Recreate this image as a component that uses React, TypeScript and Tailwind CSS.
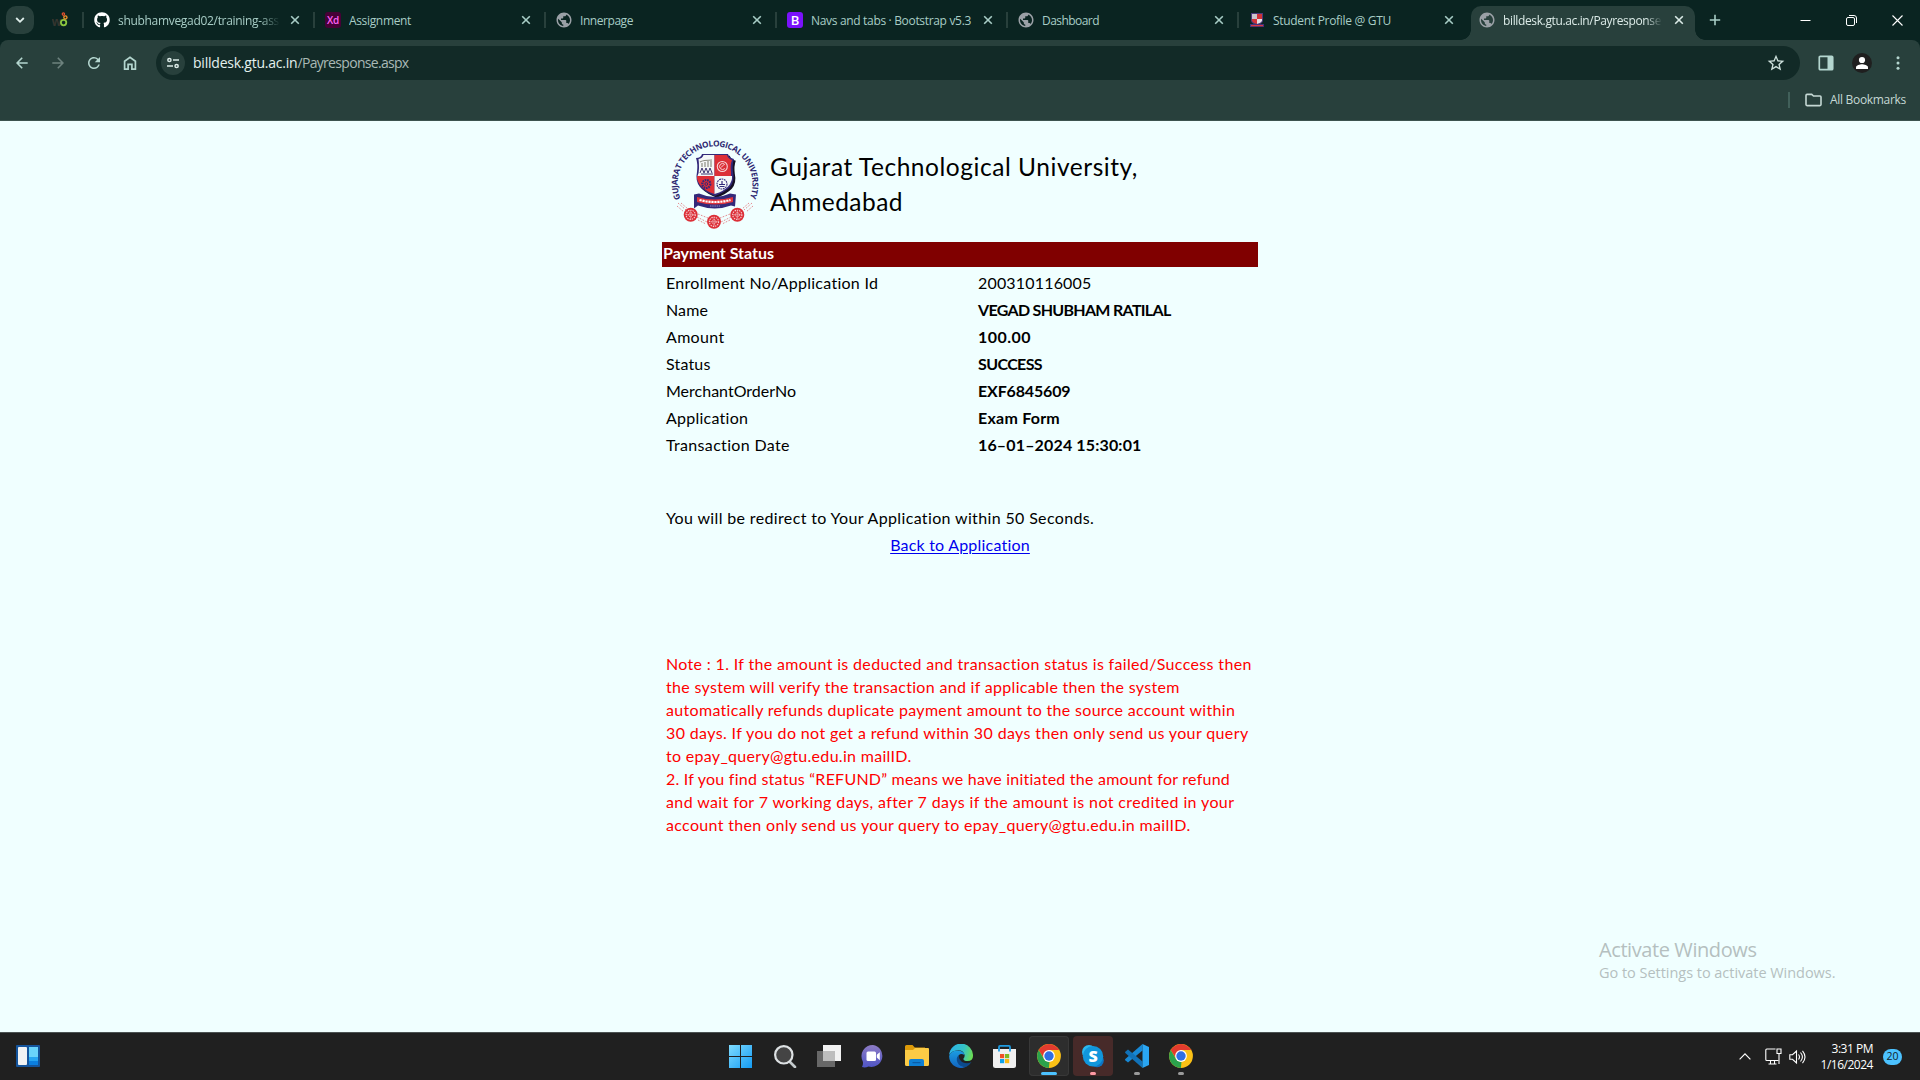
import React, { useLayoutEffect, useRef, useState } from "react";
import { FaGithub } from "react-icons/fa";
import { MdPublic, MdRefresh, MdStarBorder } from "react-icons/md";

/* Single line of text whose tracking is adjusted once, on mount, so that it spans a given width. */
function Line({ w, className = "", children }: { w: number; className?: string; children: string }) {
  const ref = useRef<HTMLSpanElement>(null);
  const [tracking, setTracking] = useState(0);
  useLayoutEffect(() => {
    const natural = ref.current!.getBoundingClientRect().width;
    setTracking((w - natural) / children.length);
  }, []);
  return (
    <span ref={ref} className={`inline-block w-max whitespace-pre ${className}`} style={{ letterSpacing: `${tracking}px` }}>
      {children}
    </span>
  );
}

function CloseX({ className = "" }: { className?: string }) {
  return (
    <svg viewBox="0 0 10 10" className={`size-[10px] shrink-0 ${className}`} fill="none" stroke="currentColor" strokeWidth="1.6">
      <path d="M1.2 1.2 8.8 8.8M8.8 1.2 1.2 8.8" />
    </svg>
  );
}

function Globe() {
  return <MdPublic className="-m-px size-[18px] shrink-0 text-[#9aa0a6]" />;
}

function XdIcon() {
  return (
    <div className="flex size-4 items-center justify-center rounded-[3px] bg-[#470137] text-[10px] font-semibold leading-none tracking-tight text-[#ff61f6]">
      Xd
    </div>
  );
}

function BootstrapIcon() {
  return (
    <div className="flex size-4 items-center justify-center rounded-[3px] bg-[#7a12fb] text-[13px] font-semibold leading-none text-white">
      B
    </div>
  );
}

function CrestIcon() {
  return (
    <svg viewBox="0 0 16 16" className="size-4">
      <path d="M2 1h12v8q-1 3-6 4Q3 12 2 9Z" fill="#4a3a7a" />
      <path d="M3 2h5v5H3Z" fill="#c9c4cc" />
      <path d="M8 2h5v5H8Z" fill="#d03238" />
      <path d="M3 7h5v5Q4 11 3 9Z" fill="#d03238" />
      <path d="M8 7h5v2q-1 2-5 3Z" fill="#e6dfe6" />
      <path d="M1 12h14v3H1Z" fill="#453079" />
      <path d="M2 13h12v1.2H2Z" fill="#d83a42" />
    </svg>
  );
}

function PinnedIcon() {
  return (
    <svg viewBox="0 0 16 16" className="size-4">
      <text x="-0.5" y="13.5" fontSize="12" fontWeight="700" fill="#35352f" fontFamily="Open Sans, sans-serif">w</text>
      <circle cx="11.6" cy="10.6" r="2.7" fill="none" stroke="#8cc63f" strokeWidth="1.8" />
      <circle cx="13.4" cy="5.4" r="1.6" fill="none" stroke="#f0932b" strokeWidth="1.3" />
      <circle cx="11.4" cy="2.1" r="1.2" fill="none" stroke="#e8502f" strokeWidth="1.2" />
    </svg>
  );
}

function Tab({ icon, title, w, clipped, last }: { icon: React.ReactNode; title: string; w: number; clipped?: boolean; last?: boolean }) {
  return (
    <div className="flex h-10 w-[231px] shrink-0 items-center">
      <div className="h-4 w-[2px] shrink-0 bg-[#28403c]" />
      <div className="ml-[10px] flex size-4 shrink-0 items-center justify-center">{icon}</div>
      <div
        className={`ml-2 w-[162px] shrink-0 overflow-hidden pt-[2px] ${clipped ? "[mask-image:linear-gradient(to_right,black_88%,transparent_100%)]" : ""}`}
      >
        <Line w={w} className="align-top">{title}</Line>
      </div>
      <CloseX className={last ? "ml-[9px]" : "ml-[10px]"} />
    </div>
  );
}

function TabStrip() {
  return (
    <div className="flex h-10 items-center bg-[#0a2421] text-[12px] leading-5 text-[#a8cdc6]">
      <div className="ml-[6px] flex size-7 shrink-0 items-center justify-center rounded-[10px] bg-[#28403c]">
        <svg viewBox="0 0 10 10" className="size-[10px]" fill="none" stroke="#dfeeeb" strokeWidth="1.8">
          <path d="M1.2 3 5 6.8 8.8 3" />
        </svg>
      </div>
      <div className="ml-[18px] w-[30px] shrink-0">
        <PinnedIcon />
      </div>
      <Tab icon={<FaGithub className="size-4 text-white" />} title="shubhamvegad02/training-ass" w={161} clipped />
      <Tab icon={<XdIcon />} title="Assignment" w={62} />
      <Tab icon={<Globe />} title="Innerpage" w={53} />
      <Tab icon={<BootstrapIcon />} title="Navs and tabs · Bootstrap v5.3" w={160} />
      <Tab icon={<Globe />} title="Dashboard" w={57} />
      <Tab icon={<CrestIcon />} title="Student Profile @ GTU" w={118} last />
      <div className="-ml-[7px] flex h-10 w-[244px] shrink-0 items-end">
        <div className="h-[10px] w-[10px] bg-[radial-gradient(circle_at_0_0,transparent_9.5px,#28403c_10px)]" />
        <div className="flex h-[34px] w-[224px] items-center rounded-t-[10px] bg-[#28403c] pb-[6px] text-[#dcebe8]">
          <div className="ml-2 flex size-4 shrink-0 items-center justify-center">
            <Globe />
          </div>
          <div className="ml-2 w-[159px] shrink-0 overflow-hidden pt-[2px] [mask-image:linear-gradient(to_right,black_90%,transparent_100%)]">
            <Line w={158} className="align-top">billdesk.gtu.ac.in/Payresponse</Line>
          </div>
          <CloseX className="ml-[12px]" />
        </div>
        <div className="h-[10px] w-[10px] bg-[radial-gradient(circle_at_100%_0,transparent_9.5px,#28403c_10px)]" />
      </div>
      <svg viewBox="0 0 12 12" className="ml-[4px] size-3 shrink-0" stroke="#a8cdc6" strokeWidth="1.6">
        <path d="M6 .8v10.4M.8 6h10.4" />
      </svg>
      <div className="ml-auto mr-[17px] flex items-center gap-[35px] text-white">
        <svg viewBox="0 0 11 11" className="size-[11px]" stroke="currentColor">
          <path d="M.5 5.5h10" />
        </svg>
        <svg viewBox="0 0 11 11" className="size-[11px]" fill="none" stroke="currentColor">
          <rect x=".5" y="2.5" width="8" height="8" rx="1.5" />
          <path d="M3 .5h5A2.5 2.5 0 0 1 10.5 3v5" />
        </svg>
        <svg viewBox="0 0 11 11" className="size-[11px]" fill="none" stroke="currentColor" strokeWidth="1.1">
          <path d="M.5.5l10 10M10.5.5l-10 10" />
        </svg>
      </div>
    </div>
  );
}

function Toolbar() {
  return (
    <div className="bg-[#0a2421]">
      <div className="h-[80px] rounded-t-[8px] bg-[#28403c]">
        <div className="flex h-[46px] items-center">
          <svg viewBox="0 0 12 12" className="ml-4 size-3 shrink-0" fill="none" stroke="#b4d6cf" strokeWidth="1.6">
            <path d="M11.7 6H1.3M6.2.8 1.1 6l5.1 5.2" />
          </svg>
          <svg viewBox="0 0 12 12" className="ml-6 size-3 shrink-0" fill="none" stroke="#6d827e" strokeWidth="1.6">
            <path d="M.3 6h10.4M5.8.8 10.9 6l-5.1 5.2" />
          </svg>
          <MdRefresh className="ml-[21px] size-[18px] shrink-0 text-[#b4d6cf]" />
          <svg viewBox="0 0 14 14" className="ml-5 size-[14px] shrink-0" fill="none" stroke="#b4d6cf" strokeWidth="1.7">
            <path d="M1.6 13.1V5.2L7 1.2l5.4 4v7.9H8.9V8.4H5.1v4.7Z" />
          </svg>
          <div className="ml-[19px] flex h-[34px] w-[1644px] shrink-0 items-center rounded-full bg-[#122a27]">
            <div className="ml-[5px] flex size-6 items-center justify-center rounded-full bg-[#28403c]">
              <svg viewBox="0 0 12 12" className="size-3" fill="none" stroke="#dcebe8" strokeWidth="1.5">
                <circle cx="2.4" cy="3" r="1.6" />
                <path d="M6 3h6M0 9h6" />
                <circle cx="9.6" cy="9" r="1.6" />
              </svg>
            </div>
            <div className="ml-2 flex text-[14px] leading-[34px] text-[#a9b9b6]">
              <Line w={104.5} className="text-[#e3f1ee]">billdesk.gtu.ac.in</Line>
              <Line w={111}>/Payresponse.aspx</Line>
            </div>
            <MdStarBorder className="ml-auto mr-[14px] size-5 text-[#cde0dc]" />
          </div>
          <svg viewBox="0 0 16 16" className="ml-[18px] size-4 shrink-0">
            <rect x="1.3" y="1.3" width="13.4" height="13.4" rx="1" fill="none" stroke="#b4d6cf" strokeWidth="1.7" />
            <path d="M9.5 1.3h5v13.4h-5Z" fill="#b4d6cf" />
          </svg>
          <svg viewBox="0 0 20 20" className="ml-[18px] size-5 shrink-0">
            <circle cx="10" cy="10" r="10" fill="#1f1f1f" />
            <circle cx="10" cy="7" r="3.1" fill="#fff" />
            <path d="M4 16v-1.6C4 12.2 8 11.3 10 11.3s6 .9 6 3.1V16Z" fill="#fff" />
          </svg>
          <svg viewBox="0 0 4 14" className="ml-6 h-[14px] w-1 shrink-0" fill="#b4d6cf">
            <circle cx="2" cy="1.7" r="1.5" />
            <circle cx="2" cy="7" r="1.5" />
            <circle cx="2" cy="12.3" r="1.5" />
          </svg>
        </div>
        <div className="flex h-7 items-center justify-end pr-[14px]">
          <div className="h-4 w-[2px] bg-[#41605a]" />
          <svg viewBox="0 0 17 14" className="ml-[15px] h-[14px] w-[17px]" fill="none" stroke="#c5d8d4" strokeWidth="1.6">
            <path d="M1 2.4v9.2q0 1 1 1h13q1 0 1-1V4q0-1-1-1H8.500L6.700 1.4H2q-1 0-1 1Z" />
          </svg>
          <Line w={76} className="ml-[8px] text-[12px] leading-7 text-[#c5d8d4]">All Bookmarks</Line>
        </div>
      </div>
      <div className="h-px bg-[#3d534f]" />
    </div>
  );
}

function Seal({ x, y }: { x: number; y: number }) {
  return (
    <g transform={`translate(${x} ${y})`}>
      <circle r="7" fill="#dc2f37" />
      <circle r="4.6" fill="none" stroke="#f7cfd2" strokeWidth="1.1" strokeDasharray="1.4 .9" />
      <circle r="2.1" fill="none" stroke="#f7cfd2" strokeWidth="1" strokeDasharray="1.1 .7" />
      <path d="M-4.5 0h9M0-4.5v9" stroke="#f7cfd2" strokeWidth=".5" />
    </g>
  );
}

function UniversityLogo() {
  return (
    <svg viewBox="0 0 96 98" className="h-[98px] w-24 overflow-visible">
      <defs>
        <path id="ring" d="M12.600 64.6A37.500 37.500 0 1 1 80.400 67" />
      </defs>
      <text fontFamily="Open Sans, sans-serif" fontWeight="700" fontSize="8.2" fill="#2c2670">
        <textPath href="#ring" textLength="147" lengthAdjust="spacing">GUJARAT TECHNOLOGICAL UNIVERSITY</textPath>
      </text>
      <path d="M29 25q5 0 6-4h26q1 4 6 5-2 5-1 13 2 9-3 15-5 5-15 9-10-4-15-9-5-6-3-15 1-8-1-14Z" transform="translate(.8 .8)" fill="#151024" />
      <path d="M28 24q5 0 6-4h26q1 4 6 5-2 5-1 13 2 9-3 15-5 5-15 9-10-4-15-9-5-6-3-15 1-8-1-14Z" fill="#33297a" />
      <path d="M30.500 25q4-.5 5-4h11v21h-17q1.500-3 1.500-8 0-6-.5-9Z" fill="#f4f7f7" />
      <path d="M46.500 21H59q1 3.500 5 5-2 5-1 12v4H46.500Z" fill="#dc2f37" />
      <path d="M29 42h17.500v18q-9-3-13.500-8t-4-10Z" fill="#dc2f37" />
      <path d="M46.500 42H64q.5 5-3.500 10t-14 8Z" fill="#f4f7f7" />
      <path d="M32 28q3-2 12-2M34 29v4M37 28v5M40 27v6M43 27v6" stroke="#8d8f84" strokeWidth="1.2" fill="none" />
      <path d="M32 39l2-5 2 5 2-5 2 5 2-5 2 5M33 40h12" stroke="#3d3570" strokeWidth="1" fill="none" />
      <circle cx="54.3" cy="32.5" r="5" fill="none" stroke="#f6d5d8" strokeWidth="1.1" />
      <path d="M56.800 30.500a3 3 0 1 0 0 4M53 33.500l3-3" stroke="#f6d5d8" strokeWidth="1" fill="none" />
      <circle cx="38.3" cy="50" r="4" fill="none" stroke="#33297a" strokeWidth="2.2" strokeDasharray="1.6 .8" />
      <circle cx="38.3" cy="50" r="1.4" fill="none" stroke="#33297a" />
      <circle cx="54" cy="50" r="5" fill="none" stroke="#33297a" strokeWidth="1.1" strokeDasharray="1.8 .7" />
      <path d="M51 50.500h6M51.500 52.500h5M54 47v3" stroke="#33297a" strokeWidth="1.2" />
      <path d="M26 60.500l5-1q16 7 31 0l6 1-1 12-4-1q-16 6-33 0l-4 3Z" fill="#33297a" />
      <path d="M29 63q18 5 36 0v5q-18 5-36 0Z" fill="#e0343c" />
      <path d="M31.500 66q15.500 4 31 0" stroke="#fff" strokeWidth="2.2" strokeDasharray="2.2 .8" fill="none" />
      <path d="M42 72h10" stroke="#a9a4d4" strokeWidth=".8" strokeDasharray="1.5 .7" />
      <g fill="none" stroke="#e48b90" strokeWidth="1" strokeDasharray="1.7 1.4">
        <path d="M10 69l8 7M9 72l7 6M13 69l7 6M84 69l-8 7M85 72l-7 6M81 69l-7 6" />
        <path d="M29 83l10 5M30 80l10 4M30 86l8 4M63 83l-10 5M62 80l-10 4M62 86l-8 4" />
      </g>
      <Seal x={22.7} y={80.8} />
      <Seal x={46} y={87.8} />
      <Seal x={69.3} y={80.8} />
    </svg>
  );
}

const ROWS: { label: string; lw: number; value: string; vw: number; plain?: boolean }[] = [
  { label: "Enrollment No/Application Id", lw: 212.5, value: "200310116005", vw: 113.5, plain: true },
  { label: "Name", lw: 42, value: "VEGAD SHUBHAM RATILAL", vw: 192.5 },
  { label: "Amount", lw: 58.5, value: "100.00", vw: 53 },
  { label: "Status", lw: 44.5, value: "SUCCESS", vw: 64 },
  { label: "MerchantOrderNo", lw: 130, value: "EXF6845609", vw: 92.5 },
  { label: "Application", lw: 82.5, value: "Exam Form", vw: 82 },
  { label: "Transaction Date", lw: 124, value: "16–01–2024 15:30:01", vw: 163.5 },
];

const NOTES: [string, number][] = [
  ["Note : 1. If the amount is deducted and transaction status is failed/Success then", 586],
  ["the system will verify the transaction and if applicable then the system", 514],
  ["automatically refunds duplicate payment amount to the source account within", 569.5],
  ["30 days. If you do not get a refund within 30 days then only send us your query", 582.5],
  ["to epay_query@gtu.edu.in mailID.", 245.5],
  ["2. If you find status “REFUND” means we have initiated the amount for refund", 564],
  ["and wait for 7 working days, after 7 days if the amount is not credited in your", 568],
  ["account then only send us your query to epay_query@gtu.edu.in mailID.", 524.5],
];

function PaymentPage() {
  return (
    <main className="flex flex-1 justify-center bg-[#f0ffff] font-['Lato','Open_Sans',sans-serif] text-[16px] text-black">
      <div className="flex w-[596px] flex-col">
        <header className="flex h-[121px] pl-[6px] pt-[13px]">
          <UniversityLogo />
          <div className="ml-[6px] mt-[15px] flex flex-col items-start text-[24.5px] leading-[35px]">
            <Line w={368}>Gujarat Technological University,</Line>
            <Line w={133}>Ahmedabad</Line>
          </div>
        </header>
        <h1 className="h-[25px] bg-[#800000] pl-px leading-[22px] font-bold text-white">
          <Line w={111}>Payment Status</Line>
        </h1>
        <dl className="mt-[2px] grid grid-cols-[312px_1fr] pl-1 leading-[27px]">
          {ROWS.map((r) => (
            <React.Fragment key={r.label}>
              <dt className="h-[27px]">
                <Line w={r.lw}>{r.label}</Line>
              </dt>
              <dd className={`h-[27px] ${r.plain ? "" : "font-bold"}`}>
                <Line w={r.vw}>{r.value}</Line>
              </dd>
            </React.Fragment>
          ))}
        </dl>
        <div className="mt-[46px] flex flex-col items-start pl-1 leading-[27px]">
          <Line w={428.5}>You will be redirect to Your Application within 50 Seconds.</Line>
          <a className="-ml-1 self-center text-[#0000ee]">
            <Line w={140} className="underline underline-offset-2">Back to Application</Line>
          </a>
        </div>
        <div className="mt-[94px] flex flex-col items-start pl-1 leading-[23px] text-[#ff0000]">
          {NOTES.map(([t, w]) => (
            <Line key={t} w={w}>{t}</Line>
          ))}
        </div>
      </div>
    </main>
  );
}

function Chrome() {
  return (
    <svg viewBox="0 0 24 24" className="size-6">
      <circle cx="12" cy="12" r="11.9" fill="#fbc116" />
      <path d="M1.700 6.050A11.900 11.900 0 0 1 22.300 6.050H12L7.200 14.700Z" fill="#e33b2e" />
      <path d="M1.700 6.050 7 14.900q2 3 5.500 2.700L11.900 23.900A11.900 11.900 0 0 1 1.700 6.050Z" fill="#2ba24c" />
      <circle cx="12" cy="12" r="5.9" fill="#fff" />
      <circle cx="12" cy="12" r="4.7" fill="#2f6fe4" />
    </svg>
  );
}

function Tile({ children, active, attention, mark }: { children: React.ReactNode; active?: boolean; attention?: boolean; mark?: boolean }) {
  const tone = active ? "bg-[#2d2d2d] ring-1 ring-inset ring-[#383838]" : attention ? "bg-[#472a29]" : "";
  const bar = active ? "w-4 bg-[#4cc2ff]" : attention ? "w-[6px] bg-[#ff99a4]" : mark ? "w-[6px] bg-[#9a9a9a]" : "w-0";
  return (
    <div className={`flex size-10 flex-col items-center rounded-[4px] ${tone}`}>
      <div className="mt-2 size-6 shrink-0">{children}</div>
      <div className={`mt-1 h-[3px] rounded-full ${bar}`} />
    </div>
  );
}

function Taskbar() {
  return (
    <footer className="grid h-12 shrink-0 grid-cols-[721px_480px_1fr] border-t border-[#4b5252] bg-[#202020]">
      <div className="flex items-start pl-4 pt-3">
        <svg viewBox="0 0 24 22" className="h-[22px] w-6">
          <rect width="24" height="22" rx="1" fill="#14549c" />
          <rect x="2" y="2" width="9" height="18" rx="1" fill="#f0f2f4" />
          <path d="M13 2h9v10h-9Z" fill="#69d3fb" />
          <path d="M13 12h9v4h-9Z" fill="#26a5f2" />
          <path d="M13 16h9v4h-9Z" fill="#0b7fe0" />
        </svg>
      </div>
      <nav className="flex gap-1 pt-[3px]">
        <Tile>
          <svg viewBox="0 0 24 24" className="size-6">
            <defs>
              <linearGradient id="win" x1="0" y1="0" x2="1" y2="1">
                <stop offset="0" stopColor="#7fdcff" />
                <stop offset="1" stopColor="#149bf3" />
              </linearGradient>
            </defs>
            <path d="M0 1h11v11H0ZM12 1h11v11H12ZM0 13h11v11H0ZM12 13h11v11H12Z" fill="url(#win)" />
          </svg>
        </Tile>
        <Tile>
          <svg viewBox="0 0 24 24" className="size-6">
            <path d="M16.500 17.500 22 23" stroke="#c4cacd" strokeWidth="2.6" strokeLinecap="round" />
            <circle cx="10.8" cy="10.8" r="8.7" fill="#444" stroke="#dde1e3" strokeWidth="2.2" />
          </svg>
        </Tile>
        <Tile>
          <svg viewBox="0 0 24 24" className="size-6">
            <path d="M6 1h18v16H6Z" fill="#f2f2f2" />
            <path d="M0 7h18v16H0Z" fill="#686868" />
            <path d="M6 7h12v10H6Z" fill="#bdbdbd" />
          </svg>
        </Tile>
        <Tile>
          <svg viewBox="0 0 24 24" className="size-6">
            <defs>
              <linearGradient id="chat" x1="0" y1="0" x2="0" y2="1">
                <stop offset="0" stopColor="#8d7bc4" />
                <stop offset="1" stopColor="#4f55c6" />
              </linearGradient>
            </defs>
            <path d="M12 1a11 11 0 1 1-4.500 21.500Q4 24 1 23q1.500-3 .8-5.500A11.200 11.200 0 0 1 12 1Z" fill="url(#chat)" />
            <rect x="5.5" y="7.5" width="9.5" height="9.5" rx="1.5" fill="#fff" />
            <path d="m15.800 10.800 3-2.600v8l-3-2.600Z" fill="#fff" />
          </svg>
        </Tile>
        <Tile>
          <svg viewBox="0 0 24 24" className="size-6">
            <path d="M0 2.500Q0 1 1.500 1h6l2.300 2.500H20V9H0Z" fill="#dd9a09" />
            <path d="M0 6h8l2-2h13q1 0 1 1v15.500q0 1.500-1.500 1.500h-21Q0 22 0 20.500Z" fill="#fccb45" />
            <path d="M4 22v-5q0-2 2-2h11q2 0 2 2v5Z" fill="#0e7fd4" />
            <path d="M7.500 18h8v1.200h-8Z" fill="#0a5ca6" />
          </svg>
        </Tile>
        <Tile>
          <svg viewBox="0 0 24 24" className="size-6">
            <defs>
              <linearGradient id="edgeTop" x1="0" y1="0.3" x2="1" y2="0.5">
                <stop offset="0" stopColor="#2bb3ea" />
                <stop offset="0.6" stopColor="#35c3c4" />
                <stop offset="1" stopColor="#6bdc55" />
              </linearGradient>
              <linearGradient id="edgeMid" x1="0" y1="0" x2="0" y2="1">
                <stop offset="0" stopColor="#1b9de2" />
                <stop offset="1" stopColor="#1264c0" />
              </linearGradient>
            </defs>
            <path d="M.2 11A11.900 11.900 0 0 1 24 12q0 5-5.500 5-4.500 0-4-2.500 1.500-1.500 1-4Q14 6 9 6.200 3 6.500.2 11Z" fill="url(#edgeTop)" />
            <path d="M.1 12Q2 6.500 8.500 6.500q6 0 7 4.500-3.500-2-5.500 0-3 3 0 8 3 4.500 8.500 3A11.900 11.900 0 0 1 .1 12Z" fill="url(#edgeMid)" />
            <path d="M9.800 11.200Q6.500 14 8.500 18.500q2.500 5 8.500 4.300 4-2 5.500-4.800-4 2.200-8.500.4-4.200-2.200-4.200-7.200Z" fill="#0c4a8c" />
          </svg>
        </Tile>
        <Tile>
          <svg viewBox="0 0 24 24" className="size-6">
            <path d="M0 5h23v16.500q0 2.500-2.500 2.500h-18Q0 24 0 21.500Z" fill="#f0f0f0" />
            <path d="M6 7.500V2.900q0-1 1-1h9q1 0 1 1v4.600" fill="none" stroke="#1f9be0" strokeWidth="1.8" />
            <path d="M7 10h4.200v4.200H7Z" fill="#f05125" />
            <path d="M12 10h4.200v4.200H12Z" fill="#7fba22" />
            <path d="M7 15h4.200v4.200H7Z" fill="#0ea2ea" />
            <path d="M12 15h4.200v4.200H12Z" fill="#fbb813" />
          </svg>
        </Tile>
        <Tile active>
          <Chrome />
        </Tile>
        <Tile attention>
          <svg viewBox="0 0 24 24" className="size-6">
            <circle cx="8" cy="8" r="7" fill="#2bb8f0" />
            <circle cx="16" cy="16.5" r="6.8" fill="#0d74c4" />
            <circle cx="12" cy="12.2" r="10.2" fill="#1196dc" />
            <text x="12" y="17.9" textAnchor="middle" fontFamily="Open Sans, sans-serif" fontWeight="800" fontSize="16" fill="#fff">S</text>
          </svg>
        </Tile>
        <Tile mark>
          <svg viewBox="0 0 24 24" className="size-6">
            <path d="M17.500 0v6.500L3 18.500.3 16.300q-.5-.6 0-1.200Z" fill="#1788d4" />
            <path d="M17.500 24v-6.500L3 5.500.3 7.700q-.5.600 0 1.200Z" fill="#1172b8" />
            <path d="M17.500 0 24 3v18l-6.500 3Z" fill="#2aa6f2" />
          </svg>
        </Tile>
        <Tile mark>
          <Chrome />
        </Tile>
      </nav>
      <div className="flex items-center justify-end pr-[18px] text-white">
        <svg viewBox="0 0 12 7" className="h-[7px] w-3" fill="none" stroke="currentColor" strokeWidth="1.2">
          <path d="M.6 6.300 6 .9l5.400 5.400" />
        </svg>
        <svg viewBox="0 0 17 17" className="ml-[14px] size-[17px]" fill="none" stroke="currentColor" strokeWidth="1.1">
          <path d="M10.500 1H1.800q-1 0-1 1v9.500q0 1 1 1h11.700M5.500 12.500V16M9.500 12.500V16M3.500 16h8" />
          <path d="M12 1h4v4.500h-4ZM14 5.500V16" />
        </svg>
        <svg viewBox="0 0 17 16" className="ml-[7px] h-4 w-[17px]" fill="none" stroke="currentColor" strokeWidth="1.1">
          <path d="M.8 5.700v4.600h2.700L7.500 14V2L3.500 5.700ZM9.500 5.500q2 2.500 0 5M11.500 3.500q3.800 4.500 0 9M13.500 1.800q5 6.200 0 12.400" />
        </svg>
        <div className="ml-[15px] flex flex-col items-end text-[12px] leading-4">
          <Line w={41.5}>3:31 PM</Line>
          <Line w={52.5}>1/16/2024</Line>
        </div>
        <div className="ml-[10px] flex h-4 w-[19px] items-center justify-center rounded-full bg-[#4cc2ff] text-[10.5px] leading-none text-[#10222c]">
          20
        </div>
      </div>
    </footer>
  );
}

export default function App() {
  return (
    <div className="relative flex h-[1080px] w-[1920px] flex-col overflow-hidden font-['Open_Sans','Noto_Sans',sans-serif]">
      <TabStrip />
      <Toolbar />
      <PaymentPage />
      <Taskbar />
      <div className="absolute left-[1599px] top-[936px] flex flex-col items-start text-[#b5bfc0]">
        <Line w={157.5} className="text-[20px] leading-7">Activate Windows</Line>
        <Line w={236.5} className="text-[14.5px] leading-[18px]">Go to Settings to activate Windows.</Line>
      </div>
    </div>
  );
}
